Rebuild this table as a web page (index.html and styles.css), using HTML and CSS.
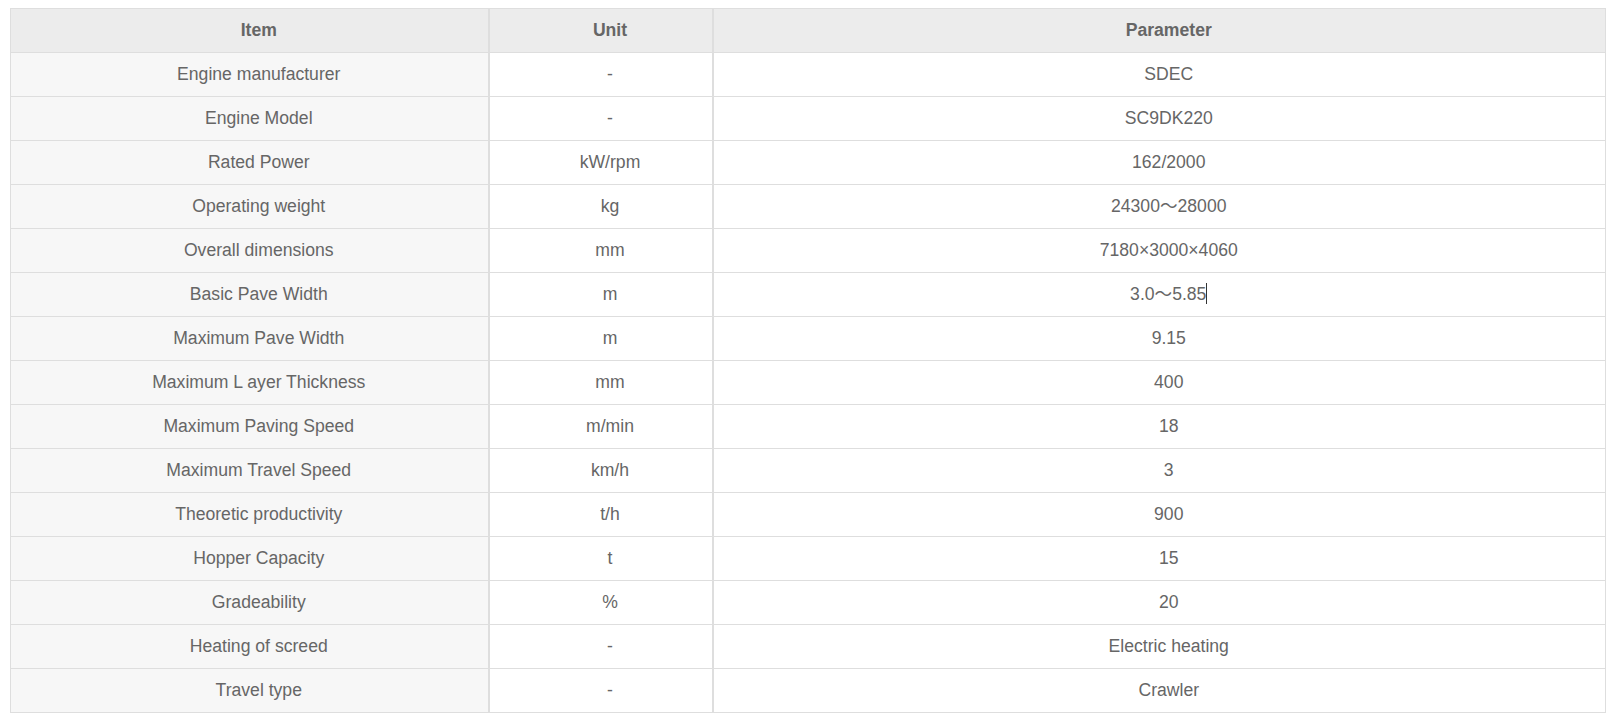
FILE: index.html
```html
<!DOCTYPE html>
<html>
<head>
<meta charset="utf-8">
<link rel="stylesheet" href="styles.css">
</head>
<body>
<div class="wrap">
<table class="spec">
<colgroup><col class="c1"><col class="c2"><col class="c3"></colgroup>
<thead>
<tr><th>Item</th><th>Unit</th><th>Parameter</th></tr>
</thead>
<tbody>
<tr><td>Engine manufacturer</td><td>-</td><td>SDEC</td></tr>
<tr><td>Engine Model</td><td>-</td><td>SC9DK220</td></tr>
<tr><td>Rated Power</td><td>kW/rpm</td><td>162/2000</td></tr>
<tr><td>Operating weight</td><td>kg</td><td>24300～28000</td></tr>
<tr><td>Overall dimensions</td><td>mm</td><td>7180×3000×4060</td></tr>
<tr><td>Basic Pave Width</td><td>m</td><td>3.0～5.85<span class="caret"></span></td></tr>
<tr><td>Maximum Pave Width</td><td>m</td><td>9.15</td></tr>
<tr><td>Maximum L ayer Thickness</td><td>mm</td><td>400</td></tr>
<tr><td>Maximum Paving Speed</td><td>m/min</td><td>18</td></tr>
<tr><td>Maximum Travel Speed</td><td>km/h</td><td>3</td></tr>
<tr><td>Theoretic productivity</td><td>t/h</td><td>900</td></tr>
<tr><td>Hopper Capacity</td><td>t</td><td>15</td></tr>
<tr><td>Gradeability</td><td>%</td><td>20</td></tr>
<tr><td>Heating of screed</td><td>-</td><td>Electric heating</td></tr>
<tr><td>Travel type</td><td>-</td><td>Crawler</td></tr>
</tbody>
</table>
</div>
</body>
</html>
```
FILE: styles.css
```css
html, body {
  margin: 0;
  padding: 0;
  background: #fff;
}
.wrap {
  padding: 8px 0 0 10px;
}
.spec {
  width: 1595px;
  table-layout: fixed;
  border-collapse: collapse;
  font-family: "Liberation Sans", Arial, "Noto Sans CJK SC", sans-serif;
  font-size: 17.6px;
  color: #666;
}
.c1 { width: 478px; }
.c2 { width: 224px; }
.c3 { width: 893px; }
.spec th,
.spec td {
  height: 41px;
  padding: 0 0 2px 19px;
  text-align: center;
  vertical-align: middle;
  border: 1px solid #dedede;
  line-height: 20px;
}
.spec th + th,
.spec td + td {
  border-left: 2px solid #dedede;
}
.spec th {
  background: #ececec;
  font-weight: bold;
}
.spec td {
  background: #fff;
}
.spec td:first-child {
  background: #f7f7f7;
}
.caret {
  display: inline-block;
  width: 1px;
  height: 21px;
  background: #333;
  vertical-align: -4px;
}
```
